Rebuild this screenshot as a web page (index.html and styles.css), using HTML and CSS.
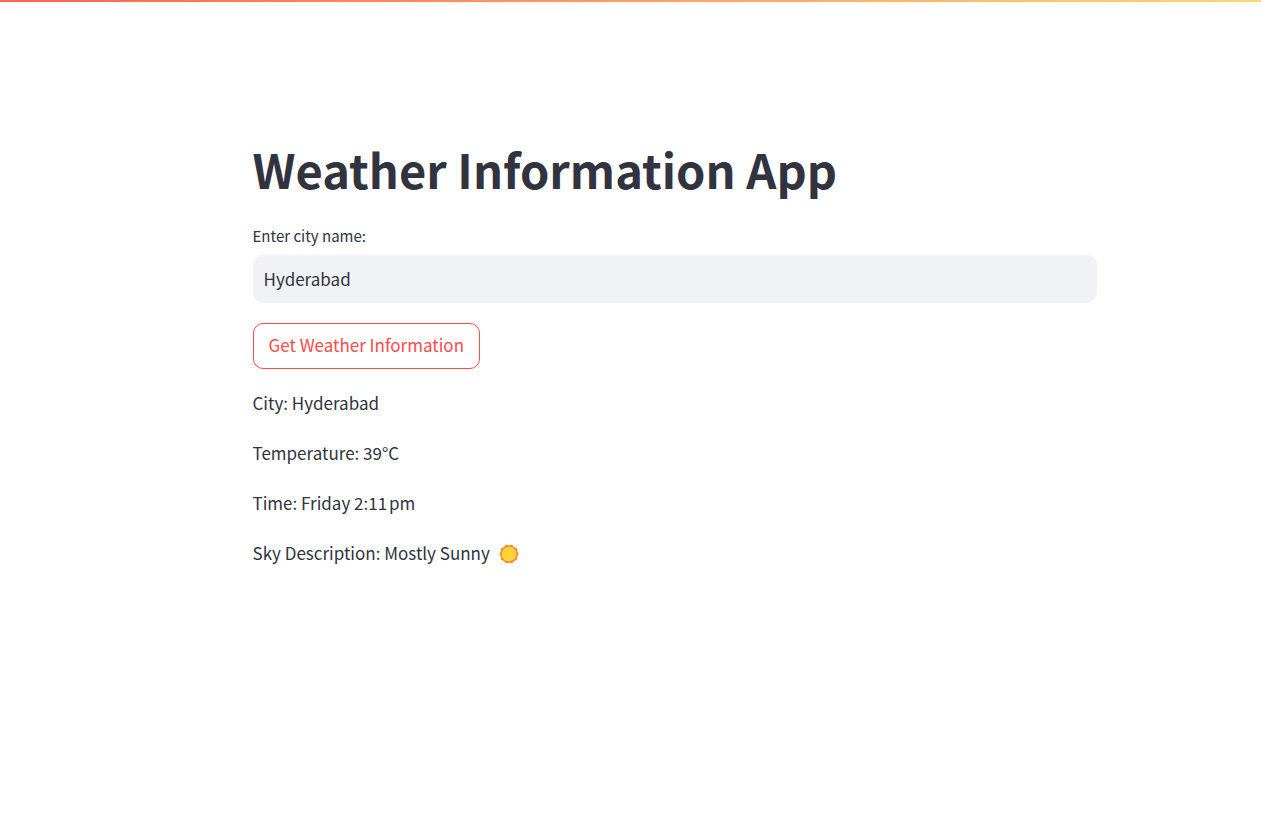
FILE: index.html
```html
<!DOCTYPE html>
<html lang="en">
<head>
<meta charset="utf-8">
<meta name="viewport" content="width=device-width, initial-scale=1">
<title>Weather Information App</title>
<link rel="stylesheet" href="styles.css">
</head>
<body>
<div class="decoration"></div>
<div class="view">
  <main class="container">
    <h1 class="title">Weather Information App</h1>
    <form class="form">
      <div class="field">
        <label class="label" for="city">Enter city name:</label>
        <input class="input" id="city" type="text" value="Hyderabad">
      </div>
      <button class="button" type="button">Get Weather Information</button>
    </form>
    <section class="results">
      <p class="line">City: Hyderabad</p>
      <p class="line">Temperature: 39°C</p>
      <p class="line">Time: Friday 2:11&#8239;pm</p>
      <p class="line">Sky Description: Mostly Sunny
        <svg class="sun" viewBox="0 0 20 20" aria-label="Sunny" role="img">
          <circle class="ring" cx="10" cy="10" r="8.7"/>
          <circle class="rays" cx="10" cy="10" r="7.6" pathLength="10"/>
          <circle class="disc" cx="10" cy="10" r="7.3"/>
        </svg>
      </p>
    </section>
  </main>
</div>
</body>
</html>
```
FILE: styles.css
```css
* { box-sizing: border-box; }
body {
  margin: 0;
  background: #fff;
  color: #31333f;
  font-family: "Noto Sans CJK SC", "Noto Sans", sans-serif;
  font-size: 17px;
  line-height: 28px;
}
.decoration {
  height: 2px;
  background: linear-gradient(90deg, #ff6352, #ffd970);
}
.view { padding-left: 88px; }
.container {
  max-width: 876px;
  margin: 0 auto;
  padding: 136px 16px 96px;
}
.title {
  margin: 0;
  padding-bottom: 24px;
  font-size: 47px;
  line-height: 62px;
  font-weight: 700;
}
.form {
  display: flex;
  flex-direction: column;
  align-items: flex-start;
  gap: 20px;
}
.field { width: 100%; display: flex; flex-direction: column; gap: 7px; }
.label { font-size: 15px; line-height: 24px; }
.input {
  width: 100%;
  height: 48px;
  padding: 0 11px 2px;
  border: 0;
  border-radius: 10px;
  background: #f0f2f6;
  color: inherit;
  font: inherit;
}
.button {
  height: 46px;
  padding: 0 15px 2px;
  border: 1px solid #ff4b4b;
  border-radius: 10px;
  background: #fff;
  color: #ff4b4b;
  font: inherit;
}
.results {
  display: flex;
  flex-direction: column;
  gap: 22px;
  margin-top: 20px;
}
.line { margin: 0; }
.sun { width: 20px; height: 20px; margin-left: 5px; vertical-align: -4px; }
.ring { fill: #ff8a30; }
.rays {
  fill: none;
  stroke: #ff8a30;
  stroke-width: 4;
  stroke-linecap: round;
  stroke-dasharray: 0 1;
}
.disc { fill: #ffd43b; }
```
